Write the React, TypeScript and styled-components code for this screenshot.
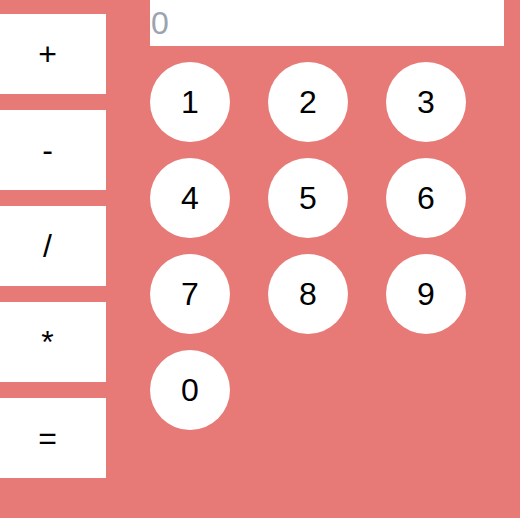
import React from "react";
import styled, { createGlobalStyle } from "styled-components";

const Global = createGlobalStyle`
  html, body { margin: 0; padding: 0; background: #e77a76; }
  body { font-family: "Liberation Sans", Arial, sans-serif; }
`;

const Page = styled.div`
  display: flex;
  gap: 44px;
  width: 520px;
  height: 518px;
  background: #e77a76;
`;

const OpColumn = styled.div`
  display: flex;
  flex-direction: column;
  gap: 16px;
  padding-top: 14px;
`;

const OpButton = styled.button`
  width: 106px;
  height: 80px;
  border: none;
  background: #ffffff;
  color: #000;
  font-family: "Liberation Sans", Arial, sans-serif;
  font-size: 32px;
  padding: 0 11px 0 0;
  display: flex;
  align-items: center;
  justify-content: center;
`;

const Main = styled.div`
  display: flex;
  flex-direction: column;
  gap: 16px;
`;

const Display = styled.input`
  width: 354px;
  height: 46px;
  box-sizing: border-box;
  border: none;
  outline: none;
  background: #fff;
  padding: 0 0 0 1px;
  font-family: "Liberation Sans", Arial, sans-serif;
  font-size: 32px;
  color: #000;
  &::placeholder { color: #9ca3af; }
`;

const Keypad = styled.div`
  display: grid;
  grid-template-columns: repeat(3, 80px);
  column-gap: 38px;
  row-gap: 16px;
`;

const Digit = styled.button`
  width: 80px;
  height: 80px;
  border-radius: 50%;
  border: none;
  background: #fff;
  color: #000;
  font-family: "Liberation Sans", Arial, sans-serif;
  font-size: 32px;
  padding: 0;
  display: flex;
  align-items: center;
  justify-content: center;
`;

const ops = ["+", "-", "/", "*", "="];
const digits = ["1", "2", "3", "4", "5", "6", "7", "8", "9", "0"];

export default function App() {
  return (
    <>
      <Global />
      <Page>
        <OpColumn>
          {ops.map((o) => (
            <OpButton key={o}>{o}</OpButton>
          ))}
        </OpColumn>
        <Main>
          <Display placeholder="0" readOnly />
          <Keypad>
            {digits.map((d) => (
              <Digit key={d}>{d}</Digit>
            ))}
          </Keypad>
        </Main>
      </Page>
    </>
  );
}
